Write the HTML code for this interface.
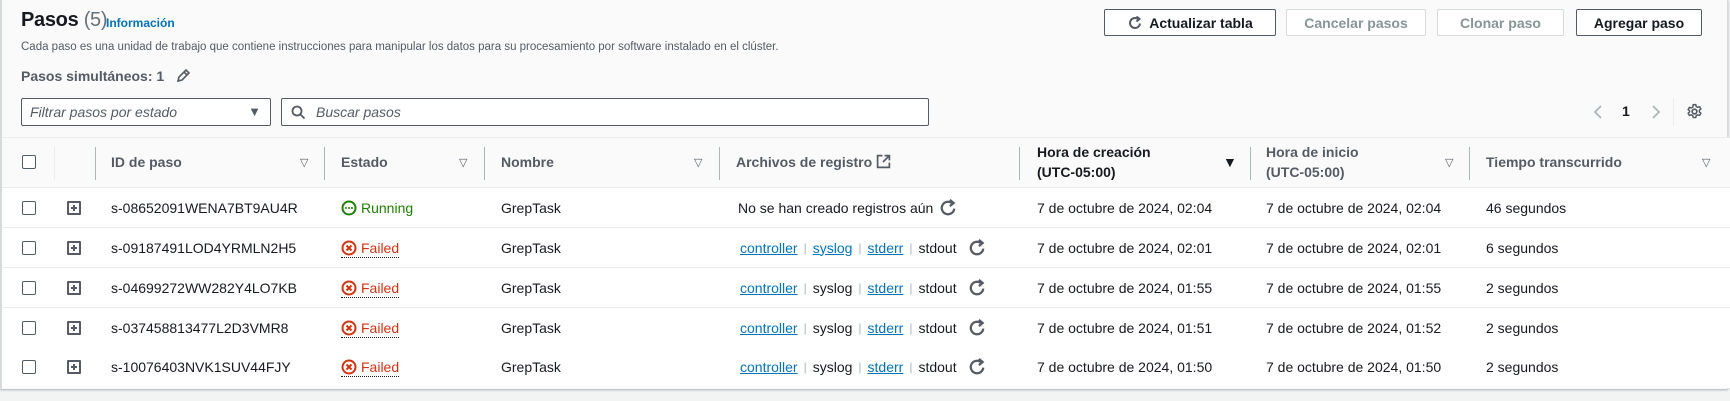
<!DOCTYPE html>
<html><head><meta charset="utf-8"><style>
*{box-sizing:border-box;margin:0;padding:0}
body{width:1730px;height:401px;background:#f2f3f3;font-family:"Liberation Sans",sans-serif;color:#16191f;position:relative;overflow:hidden}
.panel{position:absolute;left:0;top:0;width:1728px;height:389px;background:#fafafa;border-left:2px solid #d5dbdb;border-right:1px solid #d5dbdb;box-shadow:0 1px 2px rgba(0,28,36,.3)}
.a{position:absolute;white-space:nowrap}
.btn{position:absolute;top:9px;height:27px;border:1px solid #545b64;border-radius:2px;background:#fff;font-weight:bold;font-size:14px;color:#545b64;display:flex;align-items:center;justify-content:center}
.btn.dis{border-color:#d5dbdb;color:#879596}
.hdr{position:absolute;left:2px;right:0;top:137px;height:51px;border-top:1px solid #eaeded;border-bottom:1px solid #eaeded;background:#fafafa}
.sep{position:absolute;top:147px;width:1px;height:33px;background:#aab7b8}
.h{position:absolute;font-weight:bold;font-size:14px;color:#545b64;line-height:20px}
.tri{position:absolute;font-size:11px;color:#545b64}
.row{position:absolute;left:2px;right:0;height:40px;background:#fff;border-bottom:1px solid #eaeded}
.c{position:absolute;top:0;height:39px;display:flex;align-items:center;font-size:14px;white-space:nowrap}
.cb{width:14px;height:14px;border:1.5px solid #545b64;border-radius:2px;background:#fff}
.ex{width:14px;height:14px;border:2px solid #545b64;border-radius:1px;position:relative}
.ex:before{content:"";position:absolute;left:2px;top:4px;width:6px;height:2px;background:#545b64}
.ex:after{content:"";position:absolute;left:4px;top:2px;width:2px;height:6px;background:#545b64}
.lk{color:#0073bb;text-decoration:underline}
.bar{color:#aab7b8;margin:0 6px;font-size:12px}
.fail{color:#d13212;border-bottom:1px dotted #16191f;padding-bottom:1px;display:flex;align-items:center;gap:4px;margin-top:3px}
.run{color:#1d8102;display:flex;align-items:center;gap:4px}
</style></head><body>
<div class="panel"></div>
<div class="a" style="left:21px;top:9px;font-size:20px;font-weight:bold;letter-spacing:-0.3px">Pasos <span style="font-weight:normal;color:#687078">(5)</span></div>
<div class="a" style="left:106px;top:16px;font-size:12px;font-weight:bold;color:#0073bb">Información</div>
<div class="a" style="left:21px;top:41px;font-size:11.5px;color:#545b64">Cada paso es una unidad de trabajo que contiene instrucciones para manipular los datos para su procesamiento por software instalado en el clúster.</div>
<div class="a" style="left:21px;top:68px;font-size:14px;font-weight:bold;color:#545b64">Pasos simultáneos: 1</div>
<svg class="a" style="left:175px;top:68px" width="16" height="16" viewBox="0 0 16 16"><path d="M3 13l1-4 7-7 3 3-7 7z M9 4l3 3" fill="none" stroke="#545b64" stroke-width="1.6"/></svg>
<div class="btn" style="left:1104px;width:172px;color:#16191f"><svg width="16" height="16" viewBox="0 0 16 16" style="margin-right:6px"><path d="M13 8.5A5 5 0 1 1 11 4" fill="none" stroke="#545b64" stroke-width="2"/><path d="M9.5 1.5L12.5 4 9.5 6.5" fill="none" stroke="#545b64" stroke-width="2"/></svg>Actualizar tabla</div>
<div class="btn dis" style="left:1286px;width:140px">Cancelar pasos</div>
<div class="btn dis" style="left:1437px;width:127px">Clonar paso</div>
<div class="btn" style="left:1576px;width:126px;color:#16191f">Agregar paso</div>
<div class="a" style="left:21px;top:98px;width:250px;height:28px;border:1px solid #545b64;border-radius:2px;background:#fff;font-style:italic;font-size:14px;color:#545b64;padding:5px 8px">Filtrar pasos por estado<span style="position:absolute;right:9px;top:5px;font-style:normal;font-size:13px">▼</span></div>
<div class="a" style="left:281px;top:98px;width:648px;height:28px;border:1px solid #545b64;border-radius:2px;background:#fff;font-style:italic;font-size:14px;color:#545b64;padding:5px 8px 5px 34px"><svg style="position:absolute;left:9px;top:6px" width="15" height="15" viewBox="0 0 15 15"><circle cx="6" cy="6" r="4.5" fill="none" stroke="#545b64" stroke-width="1.8"/><path d="M9.5 9.5l4 4" stroke="#545b64" stroke-width="1.8"/></svg>Buscar pasos</div>
<svg class="a" style="left:1593px;top:104px" width="10" height="16" viewBox="0 0 10 16"><path d="M8 2L2 8l6 6" fill="none" stroke="#aab7b8" stroke-width="1.8"/></svg>
<div class="a" style="left:1622px;top:103px;font-size:14px;font-weight:bold">1</div>
<svg class="a" style="left:1651px;top:104px" width="10" height="16" viewBox="0 0 10 16"><path d="M2 2l6 6-6 6" fill="none" stroke="#aab7b8" stroke-width="1.8"/></svg>
<div class="a" style="left:1673px;top:98px;width:1px;height:28px;background:#eaeded"></div>
<svg class="a" style="left:1686px;top:103px" width="17" height="17" viewBox="0 0 16 16"><circle cx="8" cy="8" r="2.2" fill="none" stroke="#545b64" stroke-width="1.6"/><path d="M6.8 1.5h2.4l.4 1.8 1.4.8 1.8-.6 1.2 2.1-1.4 1.2v1.6l1.4 1.2-1.2 2.1-1.8-.6-1.4.8-.4 1.8H6.8l-.4-1.8-1.4-.8-1.8.6-1.2-2.1 1.4-1.2V7.4L2 6.2l1.2-2.1 1.8.6 1.4-.8z" fill="none" stroke="#545b64" stroke-width="1.4" stroke-linejoin="round"/></svg>
<div class="hdr"></div>
<div class="a cb" style="left:22px;top:155px"></div>
<div class="sep" style="left:54px;background:#eaeded"></div><div class="sep" style="left:95px"></div><div class="sep" style="left:324px"></div><div class="sep" style="left:484px"></div><div class="sep" style="left:719px"></div><div class="sep" style="left:1019px"></div><div class="sep" style="left:1250px"></div><div class="sep" style="left:1469px"></div>
<div class="h" style="left:111px;top:152px">ID de paso</div>
<div class="h" style="left:341px;top:152px">Estado</div>
<div class="h" style="left:501px;top:152px">Nombre</div>
<div class="h" style="left:736px;top:152px">Archivos de registro <svg width="15" height="15" viewBox="0 0 14 14" style="vertical-align:-2px"><path d="M6 1.5H1.5v11h11V8 M8 1.5h4.5V6 M12.5 1.5L6.5 7.5" fill="none" stroke="#545b64" stroke-width="1.6"/></svg></div>
<div class="h" style="left:1037px;top:142px;color:#16191f">Hora de creación<br>(UTC-05:00)</div>
<div class="h" style="left:1266px;top:142px">Hora de inicio<br>(UTC-05:00)</div>
<div class="h" style="left:1486px;top:152px">Tiempo transcurrido</div>
<div class="tri" style="left:300px;top:156px">▽</div><div class="tri" style="left:459px;top:156px">▽</div><div class="tri" style="left:694px;top:156px">▽</div><div class="tri" style="left:1223px;top:154px;font-size:14px;color:#16191f">▼</div><div class="tri" style="left:1445px;top:156px">▽</div><div class="tri" style="left:1702px;top:156px">▽</div>

<div class="row" style="top:188px"></div><div class="row" style="top:228px"></div><div class="row" style="top:268px"></div><div class="row" style="top:308px"></div><div class="row" style="top:347px;height:41px;border-bottom:none"></div>

<div class="c" style="top:188px;left:22px"><div class="cb"></div></div>
<div class="c" style="top:188px;left:67px"><div class="ex"></div></div>
<div class="c" style="top:188px;left:111px">s-08652091WENA7BT9AU4R</div>
<div class="c" style="top:188px;left:341px"><span class="run"><svg width="16" height="16" viewBox="0 0 16 16"><circle cx="8" cy="8" r="6.5" fill="none" stroke="#1d8102" stroke-width="2"/><circle cx="5" cy="8" r="1" fill="#1d8102"/><circle cx="8" cy="8" r="1" fill="#1d8102"/><circle cx="11" cy="8" r="1" fill="#1d8102"/></svg>Running</span></div>
<div class="c" style="top:188px;left:501px">GrepTask</div>
<div class="c" style="top:188px;left:738px">No se han creado registros aún <svg width="20" height="20" viewBox="0 0 16 16" style="margin-left:5px"><path d="M13 8.5A5 5 0 1 1 11 4" fill="none" stroke="#545b64" stroke-width="1.8"/><path d="M9.5 1.5L12.5 4 9.5 6.5" fill="none" stroke="#545b64" stroke-width="1.8"/></svg></div>
<div class="c" style="top:188px;left:1037px">7 de octubre de 2024, 02:04</div>
<div class="c" style="top:188px;left:1266px">7 de octubre de 2024, 02:04</div>
<div class="c" style="top:188px;left:1486px">46 segundos</div>

<div class="c" style="top:228px;left:22px"><div class="cb"></div></div>
<div class="c" style="top:228px;left:67px"><div class="ex"></div></div>
<div class="c" style="top:228px;left:111px">s-09187491LOD4YRMLN2H5</div>
<div class="c" style="top:228px;left:341px"><span class="fail"><svg width="16" height="16" viewBox="0 0 16 16"><circle cx="8" cy="8" r="6.5" fill="none" stroke="#d13212" stroke-width="2"/><path d="M5.5 5.5l5 5M10.5 5.5l-5 5" stroke="#d13212" stroke-width="2"/></svg>Failed</span></div>
<div class="c" style="top:228px;left:501px">GrepTask</div>
<div class="c" style="top:228px;left:740px"><span class="lk">controller</span><span class="bar">|</span><span class="lk">syslog</span><span class="bar">|</span><span class="lk">stderr</span><span class="bar">|</span>stdout<svg width="20" height="20" viewBox="0 0 16 16" style="margin-left:10px"><path d="M13 8.5A5 5 0 1 1 11 4" fill="none" stroke="#545b64" stroke-width="1.8"/><path d="M9.5 1.5L12.5 4 9.5 6.5" fill="none" stroke="#545b64" stroke-width="1.8"/></svg></div>
<div class="c" style="top:228px;left:1037px">7 de octubre de 2024, 02:01</div>
<div class="c" style="top:228px;left:1266px">7 de octubre de 2024, 02:01</div>
<div class="c" style="top:228px;left:1486px">6 segundos</div>

<div class="c" style="top:268px;left:22px"><div class="cb"></div></div>
<div class="c" style="top:268px;left:67px"><div class="ex"></div></div>
<div class="c" style="top:268px;left:111px">s-04699272WW282Y4LO7KB</div>
<div class="c" style="top:268px;left:341px"><span class="fail"><svg width="16" height="16" viewBox="0 0 16 16"><circle cx="8" cy="8" r="6.5" fill="none" stroke="#d13212" stroke-width="2"/><path d="M5.5 5.5l5 5M10.5 5.5l-5 5" stroke="#d13212" stroke-width="2"/></svg>Failed</span></div>
<div class="c" style="top:268px;left:501px">GrepTask</div>
<div class="c" style="top:268px;left:740px"><span class="lk">controller</span><span class="bar">|</span>syslog<span class="bar">|</span><span class="lk">stderr</span><span class="bar">|</span>stdout<svg width="20" height="20" viewBox="0 0 16 16" style="margin-left:10px"><path d="M13 8.5A5 5 0 1 1 11 4" fill="none" stroke="#545b64" stroke-width="1.8"/><path d="M9.5 1.5L12.5 4 9.5 6.5" fill="none" stroke="#545b64" stroke-width="1.8"/></svg></div>
<div class="c" style="top:268px;left:1037px">7 de octubre de 2024, 01:55</div>
<div class="c" style="top:268px;left:1266px">7 de octubre de 2024, 01:55</div>
<div class="c" style="top:268px;left:1486px">2 segundos</div>

<div class="c" style="top:308px;left:22px"><div class="cb"></div></div>
<div class="c" style="top:308px;left:67px"><div class="ex"></div></div>
<div class="c" style="top:308px;left:111px">s-037458813477L2D3VMR8</div>
<div class="c" style="top:308px;left:341px"><span class="fail"><svg width="16" height="16" viewBox="0 0 16 16"><circle cx="8" cy="8" r="6.5" fill="none" stroke="#d13212" stroke-width="2"/><path d="M5.5 5.5l5 5M10.5 5.5l-5 5" stroke="#d13212" stroke-width="2"/></svg>Failed</span></div>
<div class="c" style="top:308px;left:501px">GrepTask</div>
<div class="c" style="top:308px;left:740px"><span class="lk">controller</span><span class="bar">|</span>syslog<span class="bar">|</span><span class="lk">stderr</span><span class="bar">|</span>stdout<svg width="20" height="20" viewBox="0 0 16 16" style="margin-left:10px"><path d="M13 8.5A5 5 0 1 1 11 4" fill="none" stroke="#545b64" stroke-width="1.8"/><path d="M9.5 1.5L12.5 4 9.5 6.5" fill="none" stroke="#545b64" stroke-width="1.8"/></svg></div>
<div class="c" style="top:308px;left:1037px">7 de octubre de 2024, 01:51</div>
<div class="c" style="top:308px;left:1266px">7 de octubre de 2024, 01:52</div>
<div class="c" style="top:308px;left:1486px">2 segundos</div>

<div class="c" style="top:347px;left:22px"><div class="cb"></div></div>
<div class="c" style="top:347px;left:67px"><div class="ex"></div></div>
<div class="c" style="top:347px;left:111px">s-10076403NVK1SUV44FJY</div>
<div class="c" style="top:347px;left:341px"><span class="fail"><svg width="16" height="16" viewBox="0 0 16 16"><circle cx="8" cy="8" r="6.5" fill="none" stroke="#d13212" stroke-width="2"/><path d="M5.5 5.5l5 5M10.5 5.5l-5 5" stroke="#d13212" stroke-width="2"/></svg>Failed</span></div>
<div class="c" style="top:347px;left:501px">GrepTask</div>
<div class="c" style="top:347px;left:740px"><span class="lk">controller</span><span class="bar">|</span>syslog<span class="bar">|</span><span class="lk">stderr</span><span class="bar">|</span>stdout<svg width="20" height="20" viewBox="0 0 16 16" style="margin-left:10px"><path d="M13 8.5A5 5 0 1 1 11 4" fill="none" stroke="#545b64" stroke-width="1.8"/><path d="M9.5 1.5L12.5 4 9.5 6.5" fill="none" stroke="#545b64" stroke-width="1.8"/></svg></div>
<div class="c" style="top:347px;left:1037px">7 de octubre de 2024, 01:50</div>
<div class="c" style="top:347px;left:1266px">7 de octubre de 2024, 01:50</div>
<div class="c" style="top:347px;left:1486px">2 segundos</div>
</body></html>
